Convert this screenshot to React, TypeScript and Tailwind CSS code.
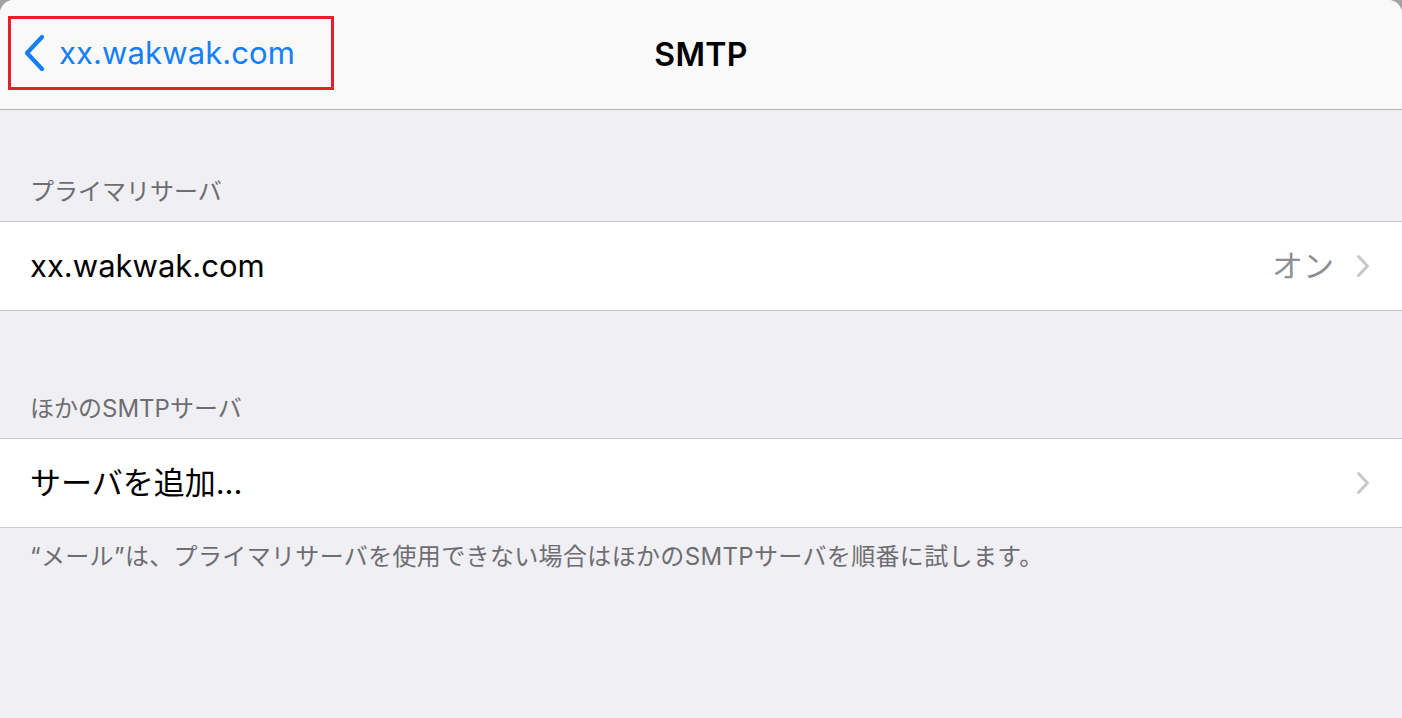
import React from "react";

const font = { fontFamily: 'Inter, "Noto Sans CJK JP", sans-serif' };

function Chevron() {
  return (
    <svg width="14" height="24" viewBox="0 0 14 24" fill="none">
      <path d="M2.5 2.5 L11.5 12 L2.5 21.5" stroke="#c7c7cc" strokeWidth="3" strokeLinecap="round" strokeLinejoin="round" />
    </svg>
  );
}

export default function App() {
  return (
    <div className="w-[1402px] h-[718px] bg-[#a3a3a3] overflow-hidden" style={font}>
      <div className="w-full h-full rounded-t-[14px] overflow-hidden bg-[#efeff4] flex flex-col">
        <div className="relative h-[110px] bg-[#f9f9f9] border-b border-[#b2b2b2] flex items-center justify-center shrink-0">
          <div className="absolute left-[8px] top-[16px] w-[326px] h-[74px] border-[3px] border-[#e5202a] flex items-center pl-[11px]">
            <svg width="26" height="38" viewBox="0 0 26 38" fill="none">
              <path d="M20 3 L5 19 L20 35" stroke="#157efb" strokeWidth="4.2" strokeLinecap="round" strokeLinejoin="round" />
            </svg>
            <span className="ml-[11px] text-[31px] text-[#157efb] tracking-[0.1px]">xx.wakwak.com</span>
          </div>
          <span className="text-[32px] font-semibold text-black tracking-[0.3px]">SMTP</span>
        </div>

        <div className="h-[111px] flex items-end pl-[30px] pb-[11px] shrink-0">
          <span className="text-[24px] text-[#6d6d72]">プライマリサーバ</span>
        </div>
        <div className="h-[90px] bg-white border-y border-[#c8c7cc] flex items-center pl-[30px] pr-[32px] shrink-0">
          <span className="text-[31px] text-black flex-1">xx.wakwak.com</span>
          <span className="text-[31px] text-[#8e8e93] mr-[22px]">オン</span>
          <Chevron />
        </div>

        <div className="h-[127px] flex items-end pl-[30px] pb-[11px] shrink-0">
          <span className="text-[24px] text-[#6d6d72]">ほかのSMTPサーバ</span>
        </div>
        <div className="h-[90px] bg-white border-y border-[#c8c7cc] flex items-center pl-[30px] pr-[32px] shrink-0">
          <span className="text-[31px] text-black flex-1">サーバを追加...</span>
          <Chevron />
        </div>
        <div className="pl-[30px] pt-[11px]">
          <span className="text-[24px] text-[#6d6d72] tracking-[0.35px]">“メール”は、プライマリサーバを使用できない場合はほかのSMTPサーバを順番に試します。</span>
        </div>
      </div>
    </div>
  );
}
